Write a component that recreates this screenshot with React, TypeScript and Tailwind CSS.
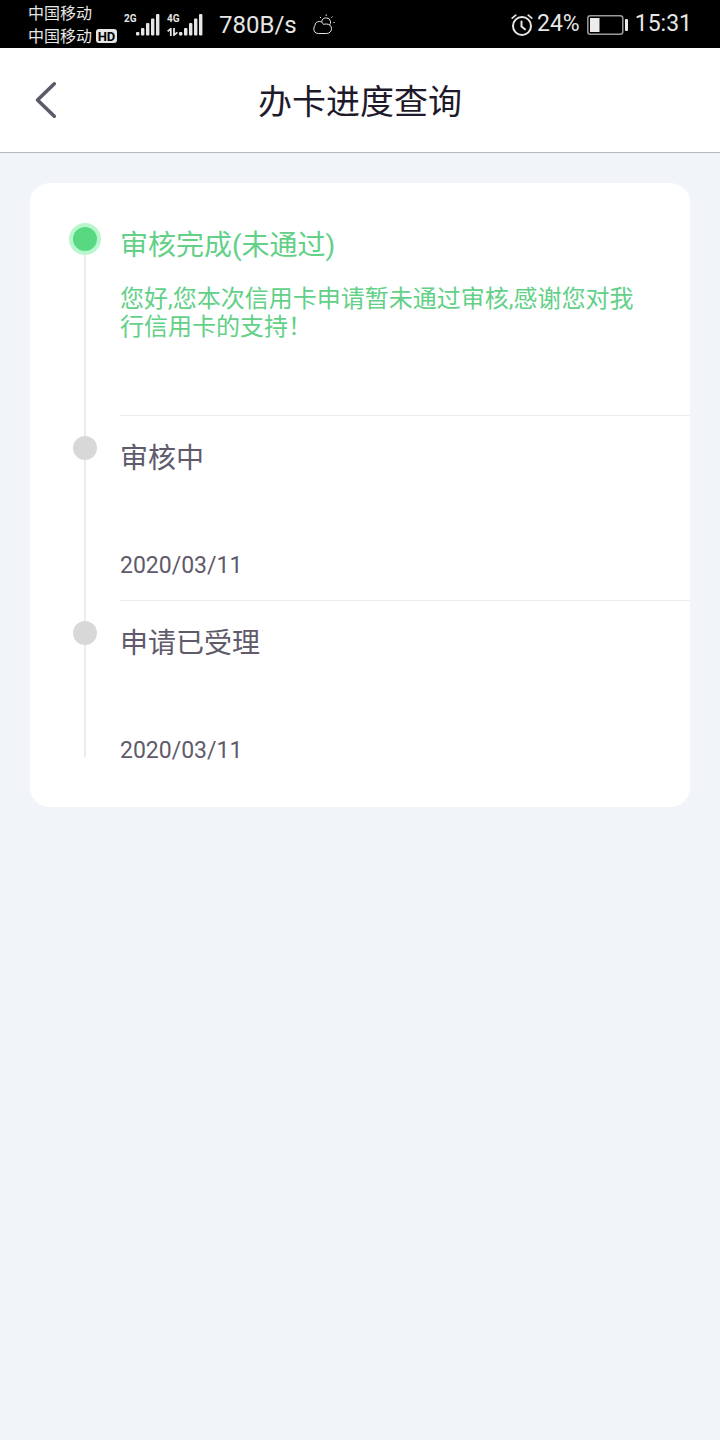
import React from 'react';
import { clsx } from 'clsx';

interface Step {
  title: string;
  detail?: string;
  date?: string;
  active?: boolean;
}

const steps: Step[] = [
  {
    title: '审核完成(未通过)',
    detail: '您好,您本次信用卡申请暂未通过审核,感谢您对我行信用卡的支持！',
    active: true,
  },
  { title: '审核中', date: '2020/03/11' },
  { title: '申请已受理', date: '2020/03/11' },
];

const SignalBars = () => (
  <svg width="24" height="22" viewBox="0 0 24 22" fill="currentColor" aria-hidden="true">
    <rect x="0" y="18" width="3.4" height="3.6" rx="1" />
    <rect x="5" y="14" width="3.4" height="7.6" rx="1" />
    <rect x="10" y="9" width="3.4" height="12.6" rx="1" />
    <rect x="15" y="4.5" width="3.4" height="17.1" rx="1" />
    <rect x="20" y="0" width="3.4" height="21.6" rx="1" />
  </svg>
);

const DataArrows = () => (
  <svg width="11" height="8" viewBox="0 0 11 8" fill="none" stroke="currentColor" strokeWidth="1.8" aria-hidden="true">
    <path d="M0.6 3.4L3.8 0.8V8" />
    <path d="M7 0V7L10.4 4.4" />
  </svg>
);

const WeatherIcon = () => (
  <svg
    width="22"
    height="22"
    viewBox="0 0 22 22"
    fill="none"
    stroke="currentColor"
    strokeWidth="1"
    strokeLinecap="round"
    aria-hidden="true"
  >
    <path d="M5 19.5C2.500 19.5 .8 17.500 .8 15c0-1.600.5-2.800 1.200-3.600C2 9 3.800 7.500 6.300 7.500c2 0 3.500 1.100 4.300 3 .8-.4 1.700-.5 2.700-.5 3.200 0 5.200 1.900 5.200 4.700s-2 4.800-4.800 4.800z" />
    <path d="M8.700 7.600a4.500 4.500 0 0 1 8.900.2c0 1.200-.3 2.200-.8 3" />
    <path d="M13.2 .8v.8M7.200 3.200l.6.600M19.300 2.800l-.6.600M20.800 8.500h.4" />
  </svg>
);

const AlarmIcon = () => (
  <svg
    width="22"
    height="22"
    viewBox="0 0 22 22"
    fill="none"
    stroke="currentColor"
    strokeWidth="2"
    strokeLinecap="round"
    aria-hidden="true"
  >
    <circle cx="11" cy="12" r="9" />
    <path d="M10.5 7.5v5l3.5 2.8" />
    <path d="M1.2 4.2L4.8 1.2M20.8 4.2L17.2 1.2" strokeWidth="1.7" />
  </svg>
);

const BatteryIcon = () => (
  <svg width="41" height="20" viewBox="0 0 41 20" fill="none" aria-hidden="true">
    <rect x="0.8" y="0.8" width="35" height="18.4" rx="2.5" stroke="#9a9a9a" strokeWidth="1.5" />
    <rect x="3" y="3" width="9.5" height="14" fill="#ececec" />
    <rect x="38" y="4" width="3" height="12" rx="1" fill="#ececec" />
  </svg>
);

const StatusBar = () => (
  <div className="flex h-12 items-center justify-between bg-black px-7 pt-px text-[#e6e6e6]">
    <div className="flex items-center">
      <div className="text-base leading-[23px]">
        <div>中国移动</div>
        <div className="flex items-center gap-1">
          中国移动
          <span className="flex h-[14px] w-[21px] items-center justify-center rounded-[3px] bg-[#e6e6e6] text-[13px] font-bold text-black">
            HD
          </span>
        </div>
      </div>
      <div className="ml-[7px] flex h-[22px]">
        <span className="w-3 text-[10px] leading-[10px] font-bold">2G</span>
        <SignalBars />
      </div>
      <div className="ml-[7px] flex h-[22px]">
        <div className="flex w-3 flex-col justify-between text-[10px] leading-[10px] font-bold">
          4G
          <DataArrows />
        </div>
        <SignalBars />
      </div>
      <span className="ml-4 text-2xl">780B/s</span>
      <span className="ml-4">
        <WeatherIcon />
      </span>
    </div>
    <div className="flex items-center text-[23px]">
      <AlarmIcon />
      <span className="ml-1">24%</span>
      <span className="mx-[7px]">
        <BatteryIcon />
      </span>
      <span>15:31</span>
    </div>
  </div>
);

const Header = () => (
  <header className="grid grid-cols-[90px_1fr_90px] items-center border-b border-[#b4babd] bg-white">
    <button type="button" aria-label="返回" className="flex h-[104px] items-center pl-[34px] text-[#5d5769]">
      <svg
        width="24"
        height="38"
        viewBox="0 0 24 38"
        fill="none"
        stroke="currentColor"
        strokeWidth="3.6"
        strokeLinecap="round"
        strokeLinejoin="round"
      >
        <path d="M20.3 2.8L3.5 19L20.3 35.2" />
      </svg>
    </button>
    <h1 className="pt-1 text-center text-[34px] leading-[50px] text-[#1f1a2b]">办卡进度查询</h1>
  </header>
);

const TimelineStep = ({ step, first, last }: { step: Step; first: boolean; last: boolean }) => (
  <li className="flex">
    {/* Rail with the dot */}
    <div className="mr-5 ml-10 flex w-[30px] shrink-0 flex-col items-center">
      <div className={clsx('h-5 w-[2px]', !first && 'bg-[#ececec]')} />
      <div
        className={clsx(
          'shrink-0 rounded-full',
          step.active ? 'size-8 border-4 border-[#b9f6cd] bg-[#58d981]' : 'size-6 bg-[#d8d8d8]'
        )}
      />
      <div className={clsx('w-[2px] grow bg-[#ececec]', last && 'mb-7')} />
    </div>
    <div
      className={clsx(
        'grow py-5',
        !last && 'border-b border-[#ececee]',
        step.active ? 'text-[#62d087]' : 'text-[#605a6b]'
      )}
    >
      <h2 className="text-[28px] leading-[46px]">{step.title}</h2>
      <p className="mt-4 min-h-7 pr-10 text-2xl leading-7">{step.detail}</p>
      <p className="mt-[26px] h-7 text-[23px] leading-7">{step.date}</p>
    </div>
  </li>
);

export default function App() {
  return (
    <div className="min-h-screen bg-[#f1f5f9] font-[Roboto,'Noto_Sans_CJK_SC',sans-serif]" lang="zh-CN">
      <StatusBar />
      <Header />
      <main className="p-[30px]">
        <ol className="rounded-[20px] bg-white pt-5 pb-[22px]">
          {steps.map((step, index) => (
            <TimelineStep key={step.title} step={step} first={index === 0} last={index === steps.length - 1} />
          ))}
        </ol>
      </main>
    </div>
  );
}
